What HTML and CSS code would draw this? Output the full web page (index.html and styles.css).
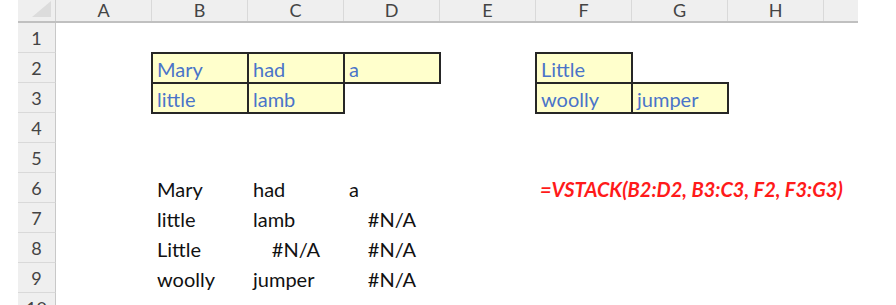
FILE: index.html
```html
<!DOCTYPE html>
<html>
<head>
<meta charset="utf-8">
<link rel="stylesheet" href="styles.css">
</head>
<body>
<div class="sheet">
  <div class="colhdr">
    <div class="corner"><svg class="tri" width="19" height="16" viewBox="0 0 19 16"><polygon points="0,16 19,16 19,0" fill="#dcdcdc"/></svg></div>
    <div class="ch">A</div>
    <div class="ch">B</div>
    <div class="ch">C</div>
    <div class="ch">D</div>
    <div class="ch">E</div>
    <div class="ch">F</div>
    <div class="ch">G</div>
    <div class="ch">H</div>
    <div class="ch last"></div>
  </div>
  <div class="body">
    <div class="rowhdrs">
      <div class="rh">1</div>
      <div class="rh">2</div>
      <div class="rh">3</div>
      <div class="rh">4</div>
      <div class="rh">5</div>
      <div class="rh">6</div>
      <div class="rh">7</div>
      <div class="rh">8</div>
      <div class="rh">9</div>
      <div class="rh">10</div>
    </div>
    <div class="cells">
      <div class="cell box in r2 cB">Mary</div>
      <div class="cell box in r2 cC">had</div>
      <div class="cell box in r2 cD">a</div>
      <div class="cell box in r3 cB">little</div>
      <div class="cell box in r3 cC">lamb</div>
      <div class="cell box in r2 cF">Little</div>
      <div class="cell box in r3 cF">woolly</div>
      <div class="cell box in r3 cG">jumper</div>

      <div class="cell out r6 cB">Mary</div>
      <div class="cell out r6 cC">had</div>
      <div class="cell out r6 cD">a</div>
      <div class="cell out r7 cB">little</div>
      <div class="cell out r7 cC">lamb</div>
      <div class="cell out err r7 cD">#N/A</div>
      <div class="cell out r8 cB">Little</div>
      <div class="cell out err r8 cC">#N/A</div>
      <div class="cell out err r8 cD">#N/A</div>
      <div class="cell out r9 cB">woolly</div>
      <div class="cell out r9 cC">jumper</div>
      <div class="cell out err r9 cD">#N/A</div>

      <div class="cell formula r6 cF">=VSTACK(B2:D2, B3:C3, F2, F3:G3)</div>
    </div>
  </div>
</div>
</body>
</html>
```
FILE: styles.css
```css
html, body {
  margin: 0;
  padding: 0;
  background: #ffffff;
  overflow: hidden;
}
body {
  width: 896px;
  height: 305px;
  font-family: "Lato", "Liberation Sans", sans-serif;
}
.sheet {
  margin-left: 18px;
}
.colhdr {
  display: flex;
  height: 23px;
  width: 840px;
  background: #efefef;
  border-bottom: 2px solid #c0c0c0;
  box-sizing: border-box;
}
.corner {
  width: 38px;
  box-sizing: border-box;
  border-right: 1px solid #d0d0d0;
  display: flex;
  align-items: flex-end;
  justify-content: flex-end;
  padding: 0 4px 4px 0;
}
.tri {
  display: block;
}
.ch {
  width: 96px;
  box-sizing: border-box;
  border-right: 1px solid #d9d9d9;
  display: flex;
  align-items: center;
  justify-content: center;
  font-size: 18px;
  color: #444444;
  line-height: 1;
  padding-bottom: 1px;
}
.ch.last {
  width: 34px;
  border-right: none;
}
.body {
  display: flex;
}
.rowhdrs {
  width: 38px;
  display: flex;
  flex-direction: column;
}
.rh {
  height: 30px;
  box-sizing: border-box;
  background: #efefef;
  border-bottom: 1px solid #d9d9d9;
  border-right: 1px solid #c8c8c8;
  display: flex;
  align-items: center;
  justify-content: center;
  font-size: 18px;
  color: #444444;
  padding-top: 1px;
}
.cells {
  display: grid;
  grid-template-columns: repeat(8, 96px) 34px;
  grid-template-rows: repeat(10, 30px);
}
.cell {
  display: flex;
  align-items: center;
  padding-left: 5px;
  padding-top: 2px;
  font-size: 20px;
  white-space: nowrap;
  box-sizing: border-box;
}
.box {
  background: #ffffcc;
  border: 2px solid #262626;
  margin: -1px;
  padding-left: 4px;
}
.in {
  color: #4a74c9;
}
.out {
  color: #111111;
}
.err {
  justify-content: center;
  padding-left: 0;
}
.formula {
  color: #ff1a1a;
  font-weight: bold;
  font-style: italic;
  font-size: 20px;
  padding-left: 4px;
  overflow: visible;
}
.r2 { grid-row: 2; }
.r3 { grid-row: 3; }
.r6 { grid-row: 6; }
.r7 { grid-row: 7; }
.r8 { grid-row: 8; }
.r9 { grid-row: 9; }
.cB { grid-column: 2; }
.cC { grid-column: 3; }
.cD { grid-column: 4; }
.cF { grid-column: 6; }
.cG { grid-column: 7; }
```
